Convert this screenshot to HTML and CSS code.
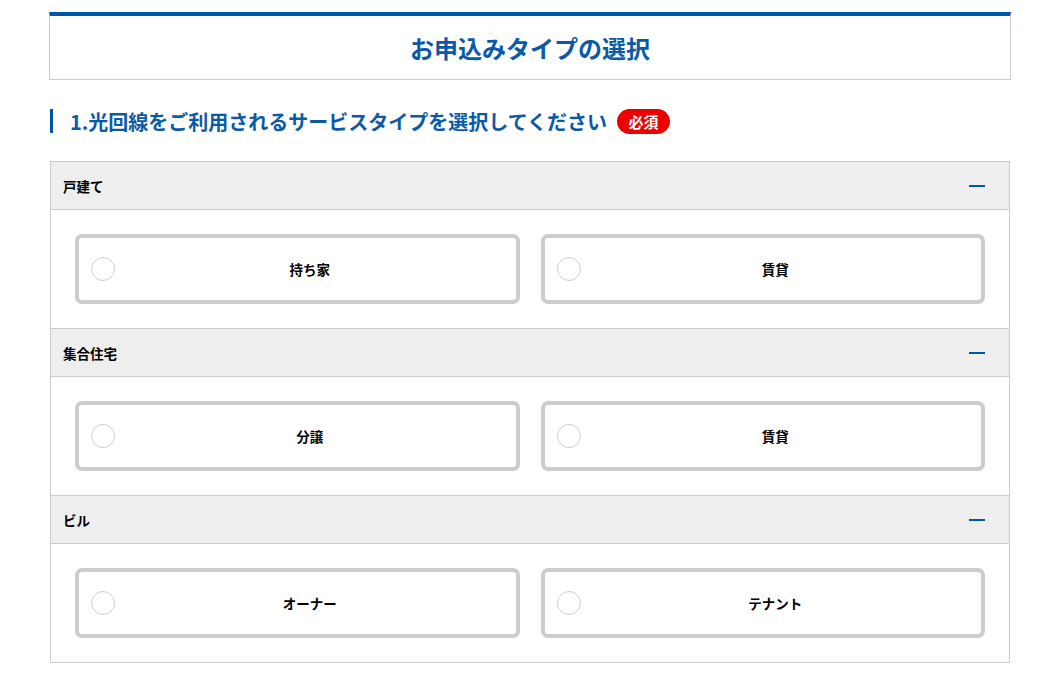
FILE: index.html
```html
<!DOCTYPE html>
<html lang="ja">
<head>
    <meta charset="UTF-8">
    <meta name="viewport" content="width=device-width, initial-scale=1.0">
    <title>お申込みタイプの選択</title>
    <link rel="stylesheet" href="styles.css">
</head>
<body>
    <div class="page">
        <div class="page-title">
            <h1>お申込みタイプの選択</h1>
        </div>

        <h2 class="step-title">
            <span>1.光回線をご利用されるサービスタイプを選択してください</span>
            <span class="badge">必須</span>
        </h2>

        <div class="accordion">
            <div class="acc-item">
                <div class="acc-head">
                    <span>戸建て</span>
                    <span class="acc-toggle"></span>
                </div>
                <div class="acc-body">
                    <label class="option">
                        <input type="radio" name="serviceType" value="house-own">
                        <span class="option-label">持ち家</span>
                    </label>
                    <label class="option">
                        <input type="radio" name="serviceType" value="house-rent">
                        <span class="option-label">賃貸</span>
                    </label>
                </div>
            </div>

            <div class="acc-item">
                <div class="acc-head">
                    <span>集合住宅</span>
                    <span class="acc-toggle"></span>
                </div>
                <div class="acc-body">
                    <label class="option">
                        <input type="radio" name="serviceType" value="mansion-own">
                        <span class="option-label">分譲</span>
                    </label>
                    <label class="option">
                        <input type="radio" name="serviceType" value="mansion-rent">
                        <span class="option-label">賃貸</span>
                    </label>
                </div>
            </div>

            <div class="acc-item">
                <div class="acc-head">
                    <span>ビル</span>
                    <span class="acc-toggle"></span>
                </div>
                <div class="acc-body">
                    <label class="option">
                        <input type="radio" name="serviceType" value="building-owner">
                        <span class="option-label">オーナー</span>
                    </label>
                    <label class="option">
                        <input type="radio" name="serviceType" value="building-tenant">
                        <span class="option-label">テナント</span>
                    </label>
                </div>
            </div>
        </div>
    </div>
</body>
</html>
```

FILE: styles.css
```css
body {
    font-family: 'Noto Sans CJK JP', 'Noto Sans', sans-serif;
    margin: 0;
    padding: 0;
    background: #ffffff;
    color: #000000;
}

.page {
    width: 960px;
    margin: 12px 0 0 50px;
}

.page-title {
    margin: 0 -1px;
    border: 1px solid #cccccc;
    border-top: 4px solid #0057a7;
}

.page-title h1 {
    margin: 0;
    height: 63px;
    line-height: 63px;
    text-align: center;
    font-size: 24px;
    font-weight: 700;
    color: #0a5aa8;
}

.step-title {
    display: flex;
    align-items: center;
    gap: 10px;
    margin: 29px 0 28px;
    padding-left: 17px;
    border-left: 3px solid #0057a7;
    height: 24px;
    font-size: 20px;
    font-weight: 700;
    color: #0a5aa8;
}

.badge {
    display: inline-flex;
    align-items: center;
    justify-content: center;
    width: 53px;
    height: 25px;
    border-radius: 13px;
    background: #ee0000;
    color: #ffffff;
    font-size: 15px;
    font-weight: 700;
}

.accordion {
    border: 1px solid #cccccc;
}

.acc-head {
    display: flex;
    align-items: center;
    justify-content: space-between;
    height: 47px;
    padding: 0 24px 0 12px;
    background: #eeeeee;
    border-bottom: 1px solid #cccccc;
    font-size: 13.5px;
    font-weight: 700;
}

.acc-toggle {
    width: 16px;
    height: 2px;
    background: #0057a7;
}

.acc-body {
    display: grid;
    grid-template-columns: 1fr 1fr;
    gap: 21px;
    padding: 24px;
    border-bottom: 1px solid #cccccc;
}

.acc-item:last-child .acc-body {
    border-bottom: none;
}

.option {
    display: flex;
    align-items: center;
    height: 62px;
    padding: 0 11px 0 12px;
    border: 4px solid #cccccc;
    border-radius: 7px;
    background: #ffffff;
    cursor: pointer;
}

.option input {
    appearance: none;
    -webkit-appearance: none;
    flex: none;
    width: 24px;
    height: 24px;
    margin: 0;
    border: 1px solid #cfcfcf;
    border-radius: 50%;
    background: #ffffff;
}

.option-label {
    flex: 1;
    text-align: center;
    font-size: 13.5px;
    font-weight: 700;
}
```
